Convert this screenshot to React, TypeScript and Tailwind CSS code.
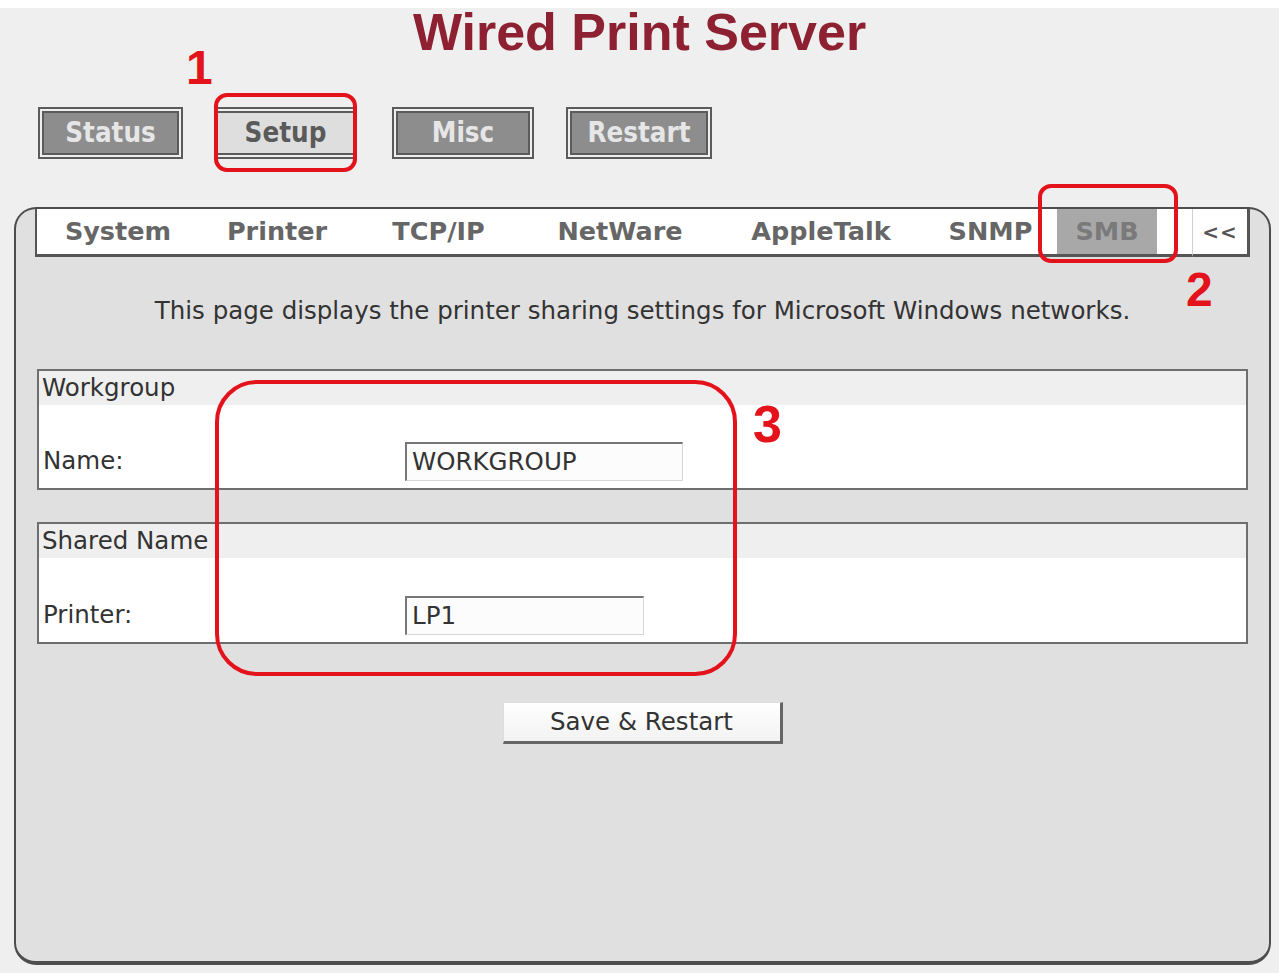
const tabs = [
  { label: "System", w: "w-[162px]" },
  { label: "Printer", w: "w-[156px]" },
  { label: "TCP/IP", w: "w-[167px]" },
  { label: "NetWare", w: "w-[196px]" },
  { label: "AppleTalk", w: "w-[206px]" },
  { label: "SNMP", w: "w-[133px]" },
];

function NavButton({ label, className, active }: { label: string; className: string; active?: boolean }) {
  if (active) {
    return (
      <div
        className={`${className} h-[52px] flex items-center justify-center border-y-[6px] border-double border-[#5b5b5b] bg-[#dedede] bg-clip-padding text-[#5a5a5a] text-[27.5px] font-bold font-['DejaVu_Sans_Condensed','DejaVu_Sans',sans-serif]`}
      >
        {label}
      </div>
    );
  }
  return (
    <div
      className={`${className} h-[52px] flex items-center justify-center border-[6px] border-double border-[#5b5b5b] bg-[#8d8d8d] bg-clip-padding text-[#e6e6e6] text-[27.5px] font-bold font-['DejaVu_Sans_Condensed','DejaVu_Sans',sans-serif]`}
    >
      {label}
    </div>
  );
}

function Field({ title, label, value, inputW, pt }: { title: string; label: string; value: string; inputW: string; pt: string }) {
  return (
    <div className="mx-[21px] border-2 border-[#6e6e6e] bg-white">
      <div className="h-[34px] bg-[#efefef] pl-[3px] leading-[34px] text-[24.5px] text-[#333]">{title}</div>
      <div className={`${pt} pb-[7px] flex items-center`}>
        <div className="w-[366px] pl-[4px] text-[24.5px] text-[#333]">{label}</div>
        <div
          className={`${inputW} h-[39px] flex items-center pl-[5px] border-t-2 border-l-2 border-[#777] border-r border-b border-r-[#d6d6d6] border-b-[#d6d6d6] bg-[#fcfcfc] text-[24.5px] text-[#333]`}
        >
          {value}
        </div>
      </div>
    </div>
  );
}

export default function App() {
  return (
    <main className="relative w-[1279px] h-[973px] overflow-hidden bg-[#efefef] font-['DejaVu_Sans',Verdana,sans-serif]">
      <div className="h-[8px] bg-white" />
      <div className="h-[48px] leading-[48px] text-center text-[52px] font-bold text-[#8d2131] font-['Liberation_Sans',Arial,sans-serif]">
        Wired Print Server
      </div>

      <div className="flex mt-[51px]">
        <NavButton label="Status" className="ml-[38px] w-[145px]" />
        <NavButton label="Setup" className="ml-[35px] w-[135px]" active />
        <NavButton label="Misc" className="ml-[39px] w-[142px]" />
        <NavButton label="Restart" className="ml-[32px] w-[146px]" />
      </div>

      <section className="mt-[48px] ml-[14px] mr-[8px] h-[758px] rounded-[22px] border-2 border-b-4 border-[#4d4d4d] bg-[#e0e0e0] flex flex-col">
        <div className="flex h-[48px] mx-[19px]">
          <div className="flex-1 flex bg-white border-l-2 border-b-[3px] border-[#555]">
            {tabs.map((t) => (
              <div
                key={t.label}
                className={`${t.w} flex items-center justify-center text-[25.5px] font-bold text-[#666]`}
              >
                {t.label}
              </div>
            ))}
            <div className="w-[100px] flex items-center justify-center bg-[#a8a8a8] text-[25.5px] font-bold text-[#7a7a7a]">
              SMB
            </div>
          </div>
          <div className="w-[58px] flex items-center justify-center bg-white border-l border-l-[#cfcfcf] border-r-[3px] border-b-[3px] border-r-[#555] border-b-[#555] text-[20px] font-bold text-[#555] tracking-[1px]">
            &lt;&lt;
          </div>
        </div>

        <p className="mt-[40px] h-[28px] leading-[28px] text-center text-[24.5px] text-[#333]">
          This page displays the printer sharing settings for Microsoft Windows networks.
        </p>

        <div className="mt-[44px]">
          <Field title="Workgroup" label="Name:" value="WORKGROUP" inputW="w-[278px]" pt="pt-[37px]" />
        </div>
        <div className="mt-[32px]">
          <Field title="Shared Name" label="Printer:" value="LP1" inputW="w-[239px]" pt="pt-[38px]" />
        </div>

        <div className="mt-[58px] flex justify-center">
          <button className="w-[280px] h-[42px] bg-gradient-to-b from-white to-[#f2f2f2] border-t border-l border-[#dcdcdc] border-r-[3px] border-b-[3px] border-r-[#666] border-b-[#666] text-[24.5px] text-[#333]">
            Save &amp; Restart
          </button>
        </div>
      </section>

      {/* annotations */}
      <div className="absolute left-[186px] top-[44px] leading-[48px] text-[48px] font-bold text-[#e3121b] font-['Liberation_Sans',Arial,sans-serif]">
        1
      </div>
      <div className="absolute left-[214px] top-[93px] w-[143px] h-[79px] rounded-[13px] border-4 border-[#e3121b]" />
      <div className="absolute left-[1038px] top-[184px] w-[140px] h-[79px] rounded-[13px] border-4 border-[#e3121b]" />
      <div className="absolute left-[1186px] top-[266px] leading-[48px] text-[48px] font-bold text-[#e3121b] font-['Liberation_Sans',Arial,sans-serif]">
        2
      </div>
      <div className="absolute left-[215px] top-[380px] w-[522px] h-[296px] rounded-[42px] border-4 border-[#e3121b]" />
      <div className="absolute left-[753px] top-[398px] leading-[52px] text-[52px] font-bold text-[#e3121b] font-['Liberation_Sans',Arial,sans-serif]">
        3
      </div>
    </main>
  );
}
